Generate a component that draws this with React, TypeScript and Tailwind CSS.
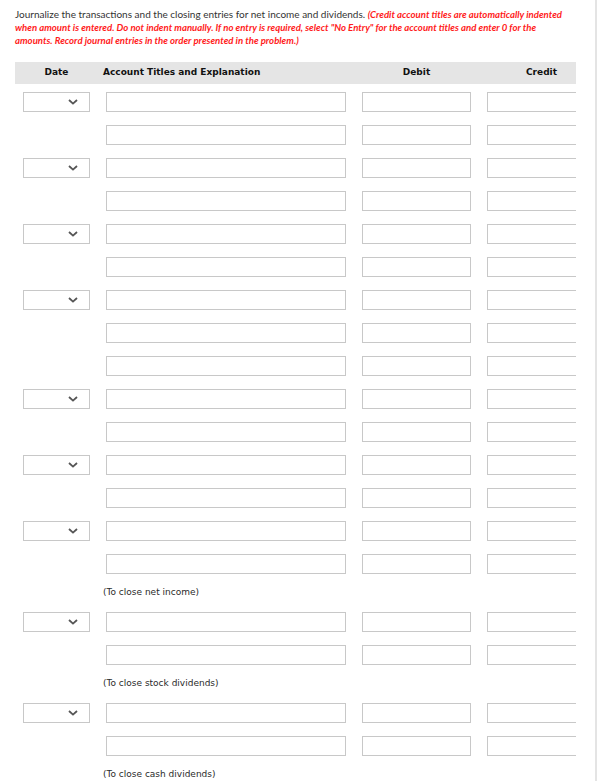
import React from 'react';

type Line = { kind: 'row'; date: boolean } | { kind: 'note'; text: string };

const lines: Line[] = [
  { kind: 'row', date: true },
  { kind: 'row', date: false },
  { kind: 'row', date: true },
  { kind: 'row', date: false },
  { kind: 'row', date: true },
  { kind: 'row', date: false },
  { kind: 'row', date: true },
  { kind: 'row', date: false },
  { kind: 'row', date: false },
  { kind: 'row', date: true },
  { kind: 'row', date: false },
  { kind: 'row', date: true },
  { kind: 'row', date: false },
  { kind: 'row', date: true },
  { kind: 'row', date: false },
  { kind: 'note', text: '(To close net income)' },
  { kind: 'row', date: true },
  { kind: 'row', date: false },
  { kind: 'note', text: '(To close stock dividends)' },
  { kind: 'row', date: true },
  { kind: 'row', date: false },
  { kind: 'note', text: '(To close cash dividends)' },
];

function DateSelect() {
  return (
    <div className="w-[67px] h-[20px] border border-[#c8c8c8] bg-white flex items-center justify-end pr-[11px]">
      <svg width="10" height="6" viewBox="0 0 10 6">
        <path d="M1 1 L5 4.6 L9 1" fill="none" stroke="#555" strokeWidth="1.8" />
      </svg>
    </div>
  );
}

function Box({ w }: { w: string }) {
  return <div className={`${w} h-[20px] border border-[#c8c8c8] bg-white`} />;
}

export default function App() {
  return (
    <div className="w-[600px] h-[781px] bg-white overflow-hidden">
      <div className="w-[597px] h-full border-r-2 border-[#e4e4e4]">
        <p className="pl-[15px] pr-[20px] pt-[8px] text-[10px] leading-[13px] text-[#333] font-['Lato',sans-serif]">
          Journalize the transactions and the closing entries for net income and dividends.{' '}
          <span className="text-[9.6px] text-[#ff1b1b] italic font-bold">
            (Credit account titles are automatically indented when amount is entered. Do not indent manually. If no
            entry is required, select "No Entry" for the account titles and enter 0 for the amounts. Record journal
            entries in the order presented in the problem.)
          </span>
        </p>

        <div className="ml-[15px] mt-[15px] w-[561px] overflow-hidden font-['DejaVu_Sans',sans-serif]">
          <div className="w-[589px]">
            <div className="flex h-[22px] items-center bg-[#e5e5e5] text-[9px] font-bold text-[#111] mb-px">
              <div className="w-[83px] text-center">Date</div>
              <div className="w-[256px] pl-[5px]">Account Titles and Explanation</div>
              <div className="w-[125px] text-center">Debit</div>
              <div className="w-[125px] text-center">Credit</div>
            </div>

            {lines.map((l, i) =>
              l.kind === 'row' ? (
                <div key={i} className="flex h-[33px] items-center">
                  <div className="w-[83px] flex justify-center">{l.date && <DateSelect />}</div>
                  <div className="w-[256px] px-[8px]">
                    <Box w="w-[240px]" />
                  </div>
                  <div className="w-[125px] px-[8px]">
                    <Box w="w-[109px]" />
                  </div>
                  <div className="w-[125px] px-[8px]">
                    <Box w="w-[109px]" />
                  </div>
                </div>
              ) : (
                <div key={i} className="flex h-[25px] items-center">
                  <div className="w-[83px]" />
                  <div className="pl-[5px] text-[9px] text-[#2a2a2a]">{l.text}</div>
                </div>
              )
            )}
          </div>
        </div>
      </div>
    </div>
  );
}
